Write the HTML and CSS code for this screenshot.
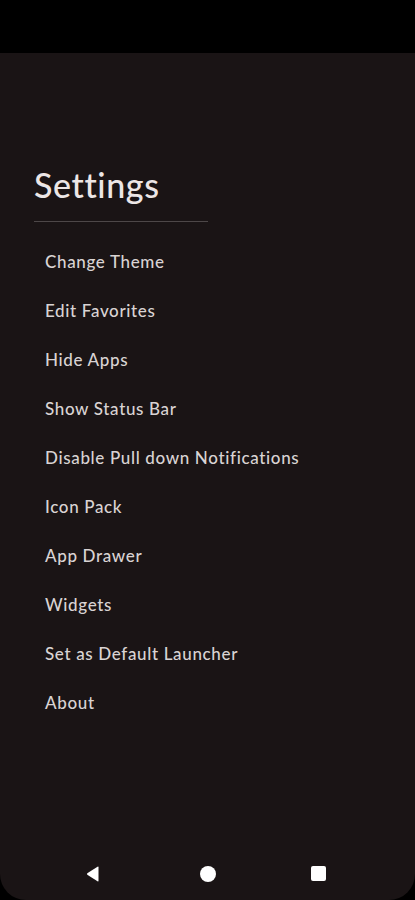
FILE: index.html
```html
<!DOCTYPE html>
<html>
<head>
<meta charset="utf-8">
<link rel="stylesheet" href="styles.css">
</head>
<body>
<div class="status"></div>
<div class="screen">
  <main class="content">
    <h1 class="title">Settings</h1>
    <div class="divider"></div>
    <ul class="menu">
      <li>Change Theme</li>
      <li>Edit Favorites</li>
      <li>Hide Apps</li>
      <li>Show Status Bar</li>
      <li>Disable Pull down Notifications</li>
      <li>Icon Pack</li>
      <li>App Drawer</li>
      <li>Widgets</li>
      <li>Set as Default Launcher</li>
      <li>About</li>
    </ul>
  </main>
  <nav class="navbar">
    <svg class="nav-back" width="14" height="16" viewBox="0 0 14 16"><path d="M12.5 1.2 L12.5 14.8 Q12.5 15.8 11.5 15.2 L1.3 8.8 Q0.6 8 1.3 7.2 L11.5 0.8 Q12.5 0.2 12.5 1.2Z" fill="#fff"/></svg>
    <span class="nav-home"></span>
    <span class="nav-recent"></span>
  </nav>
</div>
</body>
</html>
```

FILE: styles.css
```css
* { box-sizing: border-box; }
html, body {
  margin: 0;
  padding: 0;
  background: #000;
  width: 415px;
  height: 900px;
  overflow: hidden;
  font-family: Lato, "Noto Sans", sans-serif;
}
.status {
  height: 53px;
  background: #000;
}
.screen {
  height: 847px;
  background: #1a1415;
  border-radius: 0 0 26px 26px;
  display: flex;
  flex-direction: column;
}
.content {
  flex: 1;
  padding: 112px 0 0 34px;
}
.title {
  margin: 0;
  font-weight: 500;
  font-size: 34px;
  line-height: 40px;
  color: #ece6e6;
  letter-spacing: 0.6px;
}
.divider {
  margin-top: 16px;
  width: 174px;
  height: 1px;
  background: #4d4748;
}
.menu {
  list-style: none;
  margin: 30px 0 0 0;
  padding: 0 0 0 11px;
}
.menu li {
  font-size: 17px;
  font-weight: 500;
  line-height: 20px;
  height: 49px;
  color: #d9d3d3;
  letter-spacing: 0.65px;
}
.navbar {
  height: 54px;
  position: relative;
}
.nav-back { position: absolute; left: 86px; top: 20px; }
.nav-home {
  position: absolute;
  left: 200px; top: 20px;
  width: 16px; height: 16px;
  border-radius: 50%;
  background: #fff;
}
.nav-recent {
  position: absolute;
  left: 311px; top: 20px;
  width: 15px; height: 15px;
  border-radius: 2px;
  background: #fff;
}
```
